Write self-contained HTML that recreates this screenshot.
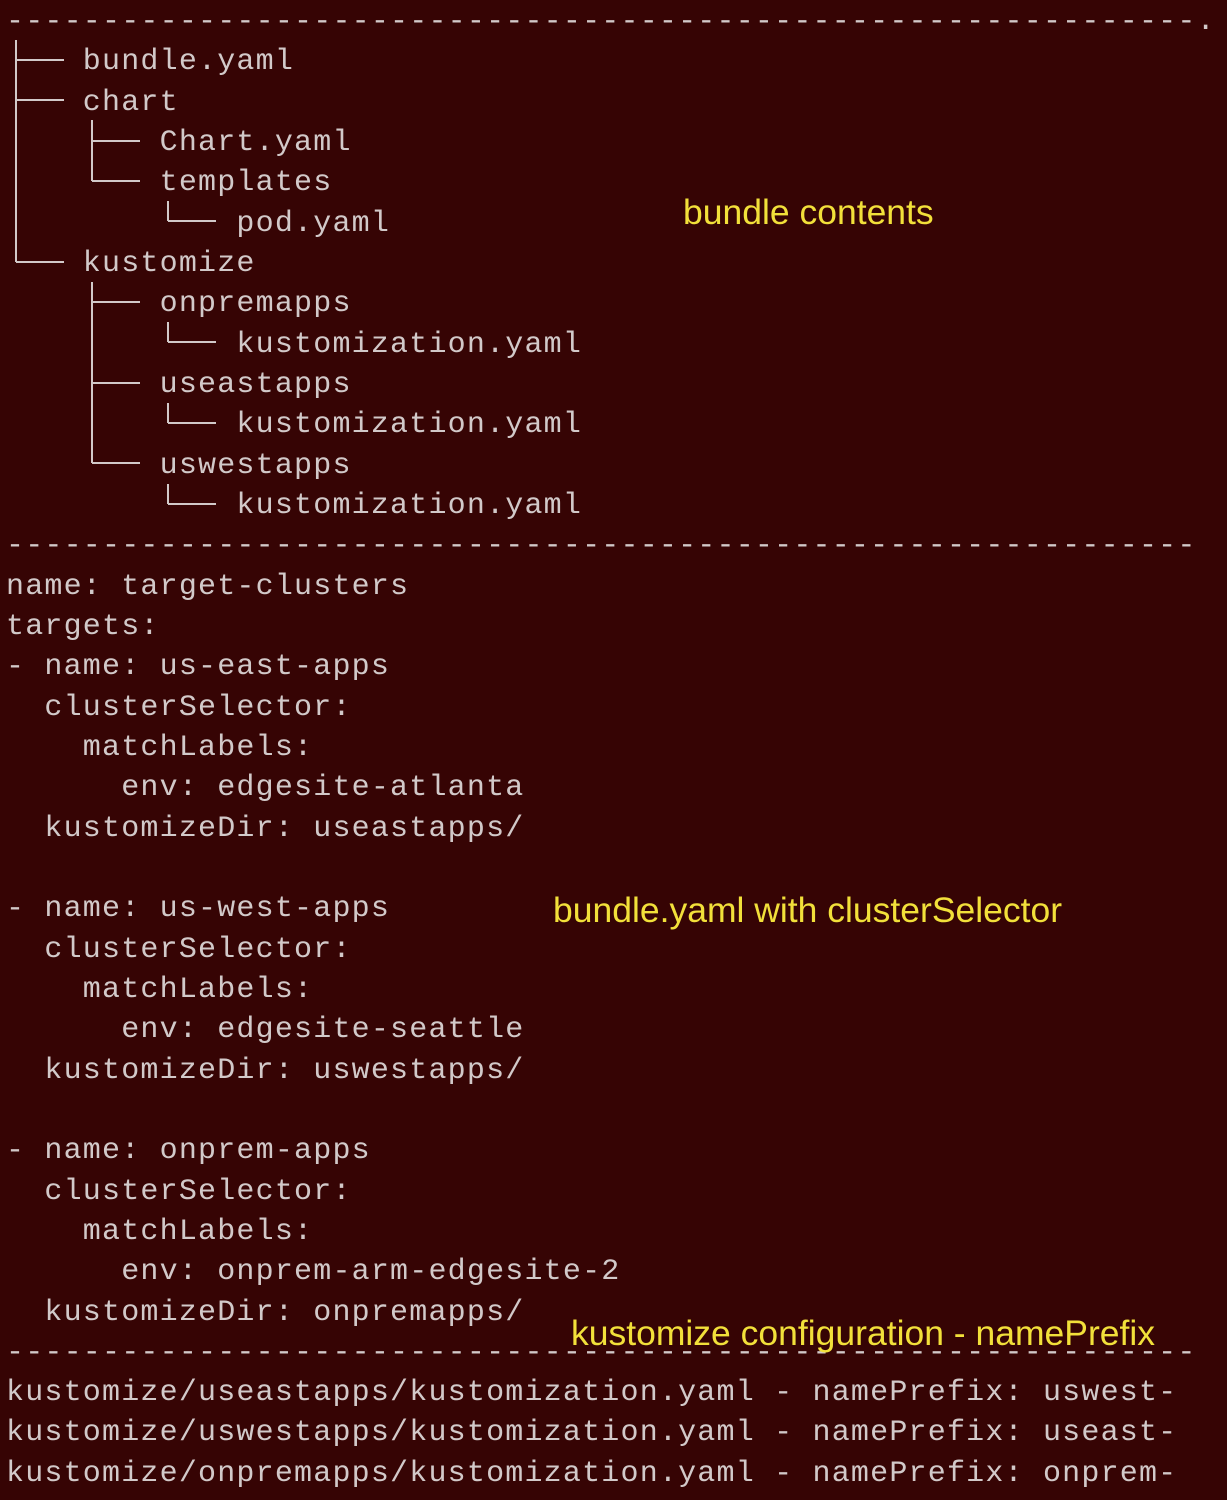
<!DOCTYPE html>
<html><head><meta charset="utf-8"><style>
html,body{margin:0;padding:0;background:#360404;width:1227px;height:1500px;overflow:hidden;position:relative}
pre{position:absolute;left:6px;top:2px;margin:0;font-family:"Liberation Mono","DejaVu Sans Mono",monospace;font-size:30px;letter-spacing:1.2px;line-height:40.33px;color:#d2c9c9}
.y{position:absolute;font-family:"Liberation Sans",sans-serif;font-size:35.5px;color:#f2e03a;white-space:nowrap;line-height:1}
svg{position:absolute;left:0;top:0}
</style></head><body>
<svg width="1227" height="560" stroke="#d2c9c9" stroke-width="2" fill="none">
<!-- col0 x=16, col4 x=92, col8 x=168 -->
<path d="M16 40V262 M16 60H64 M16 100H64 M16 262H64"/>
<path d="M92 120V181 M92 141H140 M92 181H140"/>
<path d="M168 201V221 M168 221H216"/>
<path d="M92 282V463 M92 302H140 M92 383H140 M92 463H140"/>
<path d="M168 322V342 M168 342H216"/>
<path d="M168 403V423 M168 423H216"/>
<path d="M168 484V504 M168 504H216"/>
</svg>
<pre>--------------------------------------------------------------.
    bundle.yaml
    chart
        Chart.yaml
        templates
            pod.yaml
    kustomize
        onpremapps
            kustomization.yaml
        useastapps
            kustomization.yaml
        uswestapps
            kustomization.yaml
--------------------------------------------------------------
name: target-clusters
targets:
- name: us-east-apps
  clusterSelector:
    matchLabels:
      env: edgesite-atlanta
  kustomizeDir: useastapps/

- name: us-west-apps
  clusterSelector:
    matchLabels:
      env: edgesite-seattle
  kustomizeDir: uswestapps/

- name: onprem-apps
  clusterSelector:
    matchLabels:
      env: onprem-arm-edgesite-2
  kustomizeDir: onpremapps/
--------------------------------------------------------------
kustomize/useastapps/kustomization.yaml - namePrefix: uswest-
kustomize/uswestapps/kustomization.yaml - namePrefix: useast-
kustomize/onpremapps/kustomization.yaml - namePrefix: onprem-</pre>
<div class="y" style="left:683px;top:195px">bundle contents</div>
<div class="y" style="left:553px;top:893px">bundle.yaml with clusterSelector</div>
<div class="y" style="left:571px;top:1316px">kustomize configuration - namePrefix</div>
</body></html>
